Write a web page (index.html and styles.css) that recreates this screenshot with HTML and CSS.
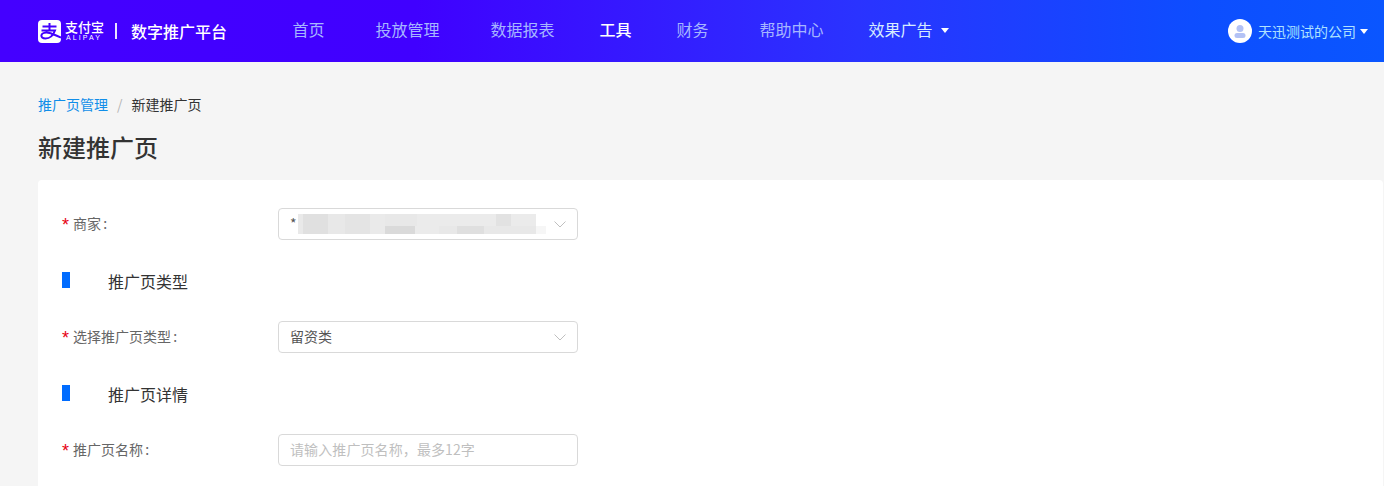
FILE: index.html
```html
<!DOCTYPE html>
<html lang="zh">
<head>
<meta charset="utf-8">
<title>新建推广页</title>
<link rel="stylesheet" href="styles.css">
</head>
<body>
<header class="topbar">
  <div class="brand">
    <svg class="logo-mark" width="23" height="23" viewBox="0 0 23 23" aria-hidden="true">
      <rect width="23" height="23" rx="4" fill="#fff"/>
      <path d="M4.500 6.500h14M11.500 3v7.500M3.500 10.500h13.500c-1.500 4-4.500 8-9.500 8-3 0-4.500-1.500-4-3.500.5-2 4-3 8-2 3 .7 7 2.700 11.500 4.500" fill="none" stroke="#4200ff" stroke-width="2"/>
    </svg>
    <div class="logo-words">
      <span class="logo-cn">支付宝</span>
      <span class="logo-en">ALIPAY</span>
    </div>
    <span class="brand-sep"></span>
    <span class="brand-name">数字推广平台</span>
  </div>
  <nav class="nav">
    <a class="nav-item">首页</a>
    <a class="nav-item">投放管理</a>
    <a class="nav-item tight">数据报表</a>
    <a class="nav-item nav-active tight">工具</a>
    <a class="nav-item">财务</a>
    <a class="nav-item tight">帮助中心</a>
    <a class="nav-item nav-bright">效果广告<span class="caret"></span></a>
  </nav>
  <div class="account">
    <svg class="avatar" width="24" height="24" viewBox="0 0 24 24" aria-hidden="true">
      <circle cx="12" cy="12" r="12" fill="#fff"/>
      <circle cx="12" cy="9.500" r="3.500" fill="#b3c2f5"/>
      <rect x="6.500" y="14" width="11" height="5" rx="2.500" fill="#b3c2f5"/>
    </svg>
    <span class="account-name">天迅测试的公司</span>
    <span class="caret"></span>
  </div>
</header>

<main class="page">
  <div class="crumbs">
    <a class="crumb-link">推广页管理</a>
    <span class="crumb-sep">/</span>
    <span class="crumb-current">新建推广页</span>
  </div>
  <h1 class="page-title">新建推广页</h1>

  <section class="card">
    <div class="field">
      <label class="field-label"><span class="req">*</span>商家 :</label>
      <div class="select">
        <span class="select-value">*</span>
        <span class="mosaic"></span>
        <svg class="chevron" width="12" height="7" viewBox="0 0 12 7" aria-hidden="true"><path d="M.5.500 6 6 11.500.500" fill="none" stroke="#bfbfbf"/></svg>
      </div>
    </div>

    <div class="section-head">
      <span class="section-bar"></span>
      <h2 class="section-title">推广页类型</h2>
    </div>

    <div class="field">
      <label class="field-label"><span class="req">*</span>选择推广页类型 :</label>
      <div class="select">
        <span class="select-value">留资类</span>
        <svg class="chevron" width="12" height="7" viewBox="0 0 12 7" aria-hidden="true"><path d="M.5.500 6 6 11.500.500" fill="none" stroke="#bfbfbf"/></svg>
      </div>
    </div>

    <div class="section-head">
      <span class="section-bar"></span>
      <h2 class="section-title">推广页详情</h2>
    </div>

    <div class="field">
      <label class="field-label"><span class="req">*</span>推广页名称 :</label>
      <div class="select">
        <span class="placeholder">请输入推广页名称，最多12字</span>
      </div>
    </div>
  </section>
</main>
</body>
</html>
```

FILE: styles.css
```css
* { box-sizing: border-box; }
html, body { margin: 0; height: 486px; overflow: hidden; }
body {
  background: #f5f5f5;
  font-family: "Noto Sans CJK SC", "Liberation Sans", sans-serif;
  font-size: 14px;
  color: #333;
}
.topbar {
  height: 62px;
  display: flex;
  align-items: center;
  padding: 0 16px 0 38px;
  background: linear-gradient(90deg, #4400ff 0%, #4000ff 30%, #2a33ff 62%, #0d4eff 87%, #0a56ff 100%);
}
.brand { display: flex; align-items: center; width: 254.500px; color: #fff; }
.logo-mark { flex: none; }
.logo-words { display: flex; flex-direction: column; align-items: flex-start; margin-left: 4px; color: #fff; }
.logo-cn { font-size: 13px; line-height: 14px; font-weight: 500; }
.logo-en { font-family: "Liberation Sans", sans-serif; font-size: 7px; line-height: 8px; letter-spacing: 2.100px; padding-left: 1px; }
.brand-sep { width: 2px; height: 16px; margin: 0 14px 0 11px; background: #e8e4ff; }
.brand-name { font-size: 16px; font-weight: 500; line-height: 20px; }
.nav { display: flex; align-items: center; flex: 1; padding-bottom: 4px; }
.nav-item { font-size: 16px; line-height: 22px; color: #a6b6ff; margin-right: 51px; white-space: nowrap; }
.nav-item.tight { margin-right: 45px; }
.nav-active { color: #fff; font-weight: 500; }
.nav-bright { color: #d6ecff; display: flex; align-items: center; }
.caret {
  width: 0; height: 0;
  border-left: 4.500px solid transparent;
  border-right: 4.500px solid transparent;
  border-top: 5px solid #fff;
  margin-left: 8px;
  margin-top: 3px;
}
.account { display: flex; align-items: center; }
.avatar { flex: none; }
.account-name { margin-left: 6px; font-size: 14px; line-height: 20px; color: #b0e2ff; }
.account .caret { margin-left: 4px; margin-top: 0; }

.page { padding: 32px 1px 0 38px; }
.crumbs { display: flex; align-items: center; height: 20px; font-size: 14px; line-height: 20px; }
.crumb-link { color: #108ee9; }
.crumb-sep { color: #b5b5b5; margin: 0 9px; }
.crumb-current { color: #333; }
.page-title { margin: 17px 0 17px; font-size: 24px; line-height: 32px; font-weight: 500; color: #333; }
.card { background: #fff; border-radius: 4px 4px 0 0; padding: 28px 24px 40px; height: 400px; }
.field { display: flex; align-items: center; height: 32px; }
.field-label { width: 216px; font-size: 14px; color: #666; display: flex; align-items: center; white-space: pre; word-spacing: -1px; padding-bottom: 2px; }
.req { color: #e60012; width: 11px; flex: none; font-size: 18px; line-height: 14px; padding-top: 3px; font-family: "Liberation Sans", sans-serif; }
.select {
  width: 300px; height: 32px;
  display: flex; align-items: center;
  padding: 0 11px;
  background: #fff;
  border: 1px solid #d9d9d9;
  border-radius: 4px;
}
.select-value { color: #555; font-size: 14px; white-space: nowrap; padding-bottom: 2px; }
.placeholder { color: #bfbfbf; font-size: 14px; white-space: nowrap; letter-spacing: .1px; padding-bottom: 2px; }
.chevron { margin-left: auto; flex: none; }
.mosaic {
  width: 248px; height: 20px; margin-left: 1px; flex: none;
  filter: blur(.7px);
  background:
    linear-gradient(90deg, transparent 0 35%, #dadada 35% 47%, #ebebeb 47% 57%, #e8e8e8 57% 64%, #dfdfdf 64% 75%, #e8e8e8 75% 96%, #f6f6f6 96% 100%) 0 100% / 100% 40% no-repeat,
    linear-gradient(90deg, #e9e9e9 0 2%, #e0e0e0 2% 12%, #e8e8e8 12% 19%, #e4e4e4 19% 29%, #eaeaea 29% 35%, #e8e8e8 35% 48%, #ebebeb 48% 80%, #e2e2e2 80% 86%, #ebebeb 86% 96%, #fff 96% 100%);
}
.section-head { display: flex; align-items: center; height: 32px; margin: 27px 0 22px; }
.section-bar { width: 8px; height: 16px; background: #006cff; margin-top: -6px; }
.section-title { margin: 0 0 0 38px; padding-bottom: 4px; font-size: 16px; line-height: 22px; font-weight: 400; color: #333; }
```
